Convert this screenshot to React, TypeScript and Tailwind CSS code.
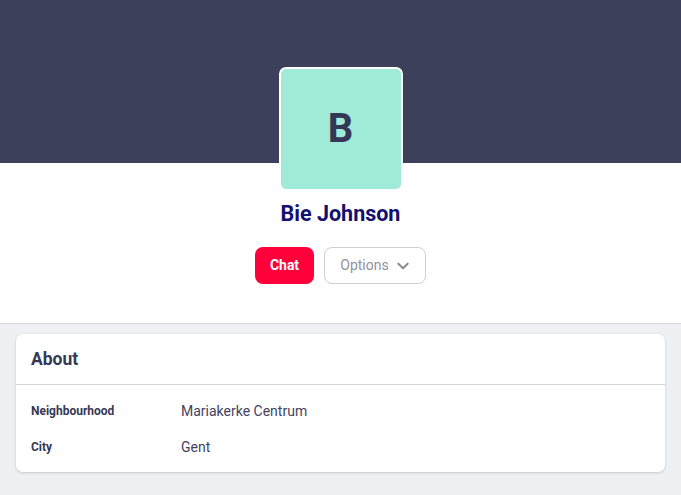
import React from "react";

export default function App() {
  return (
    <div className="min-h-[495px] bg-[#eef0f4]" style={{ fontFamily: "Roboto, 'Liberation Sans', sans-serif" }}>
      <div className="h-[163px] bg-[#3c405b]" />
      <div className="bg-white border-b border-[#d4d5da] flex flex-col items-center pb-[39px]">
        <div className="-mt-[96px] w-[124px] h-[124px] rounded-[7px] border-2 border-white bg-[#9febd8] flex items-center justify-center">
          <span className="text-[40px] font-bold text-[#343856] leading-none">B</span>
        </div>
        <div className="mt-[9px] text-[21.5px] leading-[28px] font-bold text-[#14106e]">Bie Johnson</div>
        <div className="mt-[19px] flex gap-[10px]">
          <button className="h-[37px] w-[59px] rounded-[8px] bg-[#ff003a] text-white text-[14px] font-bold">Chat</button>
          <button className="h-[37px] w-[102px] rounded-[8px] border border-[#cfd0d4] bg-white text-[#929397] text-[14px] flex items-center justify-center gap-[7px]">
            Options
            <svg width="14" height="14" viewBox="0 0 24 24" fill="none" stroke="#8c8d91" strokeWidth="3.5" strokeLinecap="round" strokeLinejoin="round">
              <path d="M4 8l8 8 8-8" />
            </svg>
          </button>
        </div>
      </div>
      <div className="px-[16px] pt-[10px] pb-[24px]">
        <div className="bg-white rounded-[7px] shadow-[0_1px_3px_rgba(0,0,0,0.18)]">
          <div className="h-[51px] flex items-center px-[15px] border-b border-[#d4d5da]">
            <span className="text-[17.5px] font-bold text-[#343856]">About</span>
          </div>
          <div className="px-[15px] pt-[8px] pb-[7px]">
            <div className="flex items-center h-[36px]">
              <span className="w-[150px] text-[12px] font-bold text-[#343856]">Neighbourhood</span>
              <span className="text-[14px] text-[#3f4360]">Mariakerke Centrum</span>
            </div>
            <div className="flex items-center h-[36px]">
              <span className="w-[150px] text-[12px] font-bold text-[#343856]">City</span>
              <span className="text-[14px] text-[#3f4360]">Gent</span>
            </div>
          </div>
        </div>
      </div>
    </div>
  );
}
